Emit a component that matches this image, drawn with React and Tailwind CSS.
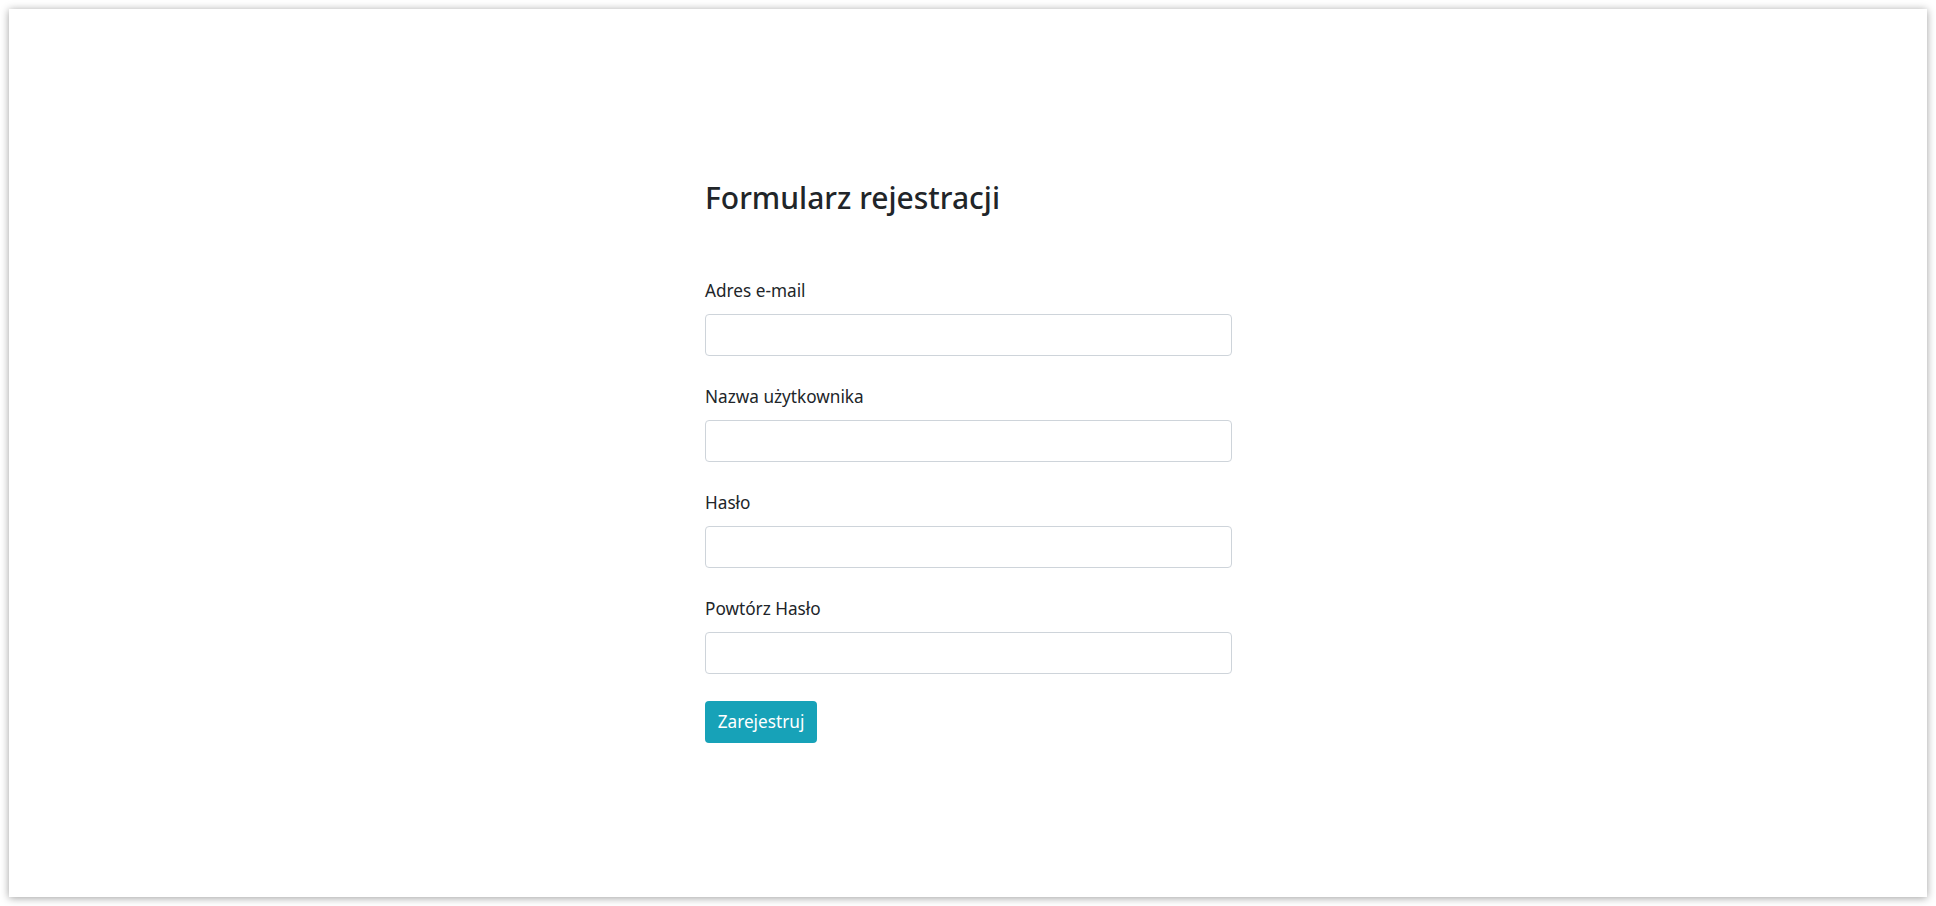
export default function App() {
  const fields = ["Adres e-mail", "Nazwa użytkownika", "Hasło", "Powtórz Hasło"];
  return (
    <div
      className="h-[906px] w-full bg-white p-[9px] flex"
      style={{ fontFamily: '"Noto Sans", "Open Sans", sans-serif' }}
    >
      <div className="flex-1 bg-white shadow-[0_1px_8px_rgba(0,0,0,0.38)] pt-[170px] pl-[696px]">
        <div className="w-[527px] text-[#212529]">
          <h3 className="text-[30px] leading-[37px] font-medium">Formularz rejestracji</h3>
          <div className="mt-[61px] flex flex-col gap-[27px]">
            {fields.map((f) => (
              <div key={f} className="flex flex-col">
                <label className="text-[17.2px] leading-[28px] mb-[9px]">{f}</label>
                <input
                  type={f.startsWith("Adres") ? "email" : f.includes("Hasło") ? "password" : "text"}
                  className="h-[42px] w-full rounded-[4px] border border-[#ced4da] bg-white px-3 outline-none"
                />
              </div>
            ))}
          </div>
          <button className="mt-[27px] h-[42px] w-[112px] rounded-[4px] bg-[#17a2b8] text-white text-[17.2px] leading-[26px]">
            Zarejestruj
          </button>
        </div>
      </div>
    </div>
  );
}
